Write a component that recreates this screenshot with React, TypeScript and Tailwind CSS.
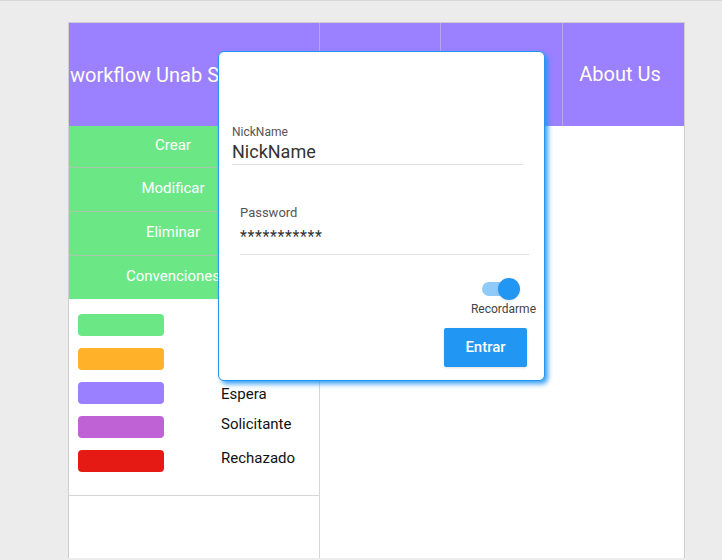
import { useState } from "react"

const menu = ["Crear", "Modificar", "Eliminar", "Convenciones"]

const legend = [
    { color: "bg-[#6ce786]", label: "Aprobado" },
    { color: "bg-[#ffb129]", label: "En proceso" },
    { color: "bg-[#9a80ff]", label: "Espera" },
    { color: "bg-[#bf62d6]", label: "Solicitante" },
    { color: "bg-[#e61a14]", label: "Rechazado" },
]

function Header() {
    return (
        <div className="flex h-[103px] bg-[#9b80ff] text-[20px] text-[#fffdf0]">
            <div className="w-[251px] flex items-center border-r border-[#b5a6f0] overflow-hidden whitespace-nowrap pl-px">
                workflow Unab Sistema
            </div>
            <div className="w-[121px] flex items-center justify-center border-r border-[#b5a6f0]">Inicio</div>
            <div className="w-[122px] flex items-center justify-center border-r border-[#b5a6f0]">Servicios</div>
            <div className="flex-1 flex items-center justify-center pr-[7px] pb-[2px]">About Us</div>
        </div>
    )
}

function Sidebar() {
    return (
        <div className="w-[251px] border-r border-[#d6d6d6] flex flex-col">
            <div className="w-[208px] flex flex-col">
                {menu.map((m, i) => (
                    <div key={m}
                        className={`${i === 0 ? "h-[41px]" : "h-[44px]"} bg-[#6ce786] text-white text-[15px] flex items-center justify-center pb-[2px] border-t border-[#a8c9b0] first:border-t-0`}>
                        {m}
                    </div>
                ))}
            </div>
            <div className="h-[197px] border-b border-[#d6d6d6] flex pt-[15px] pl-[9px]">
                <div className="flex flex-col gap-[12px]">
                    {legend.map(l => (
                        <div key={l.label} className={`w-[86px] h-[22px] rounded-[4px] ${l.color}`} />
                    ))}
                </div>
                <div className="relative flex-1 text-[15px] text-[#111]">
                    <div className="absolute left-[57px] top-[69px]">Espera</div>
                    <div className="absolute left-[57px] top-[99px]">Solicitante</div>
                    <div className="absolute left-[57px] top-[133px]">Rechazado</div>
                </div>
            </div>
        </div>
    )
}

function LoginModal() {
    const [remember, setRemember] = useState(true)
    return (
        <div className="absolute left-[149px] top-[28px] w-[327px] h-[330px] bg-white rounded-[6px] border border-[#2196f3] shadow-[3px_3px_5px_rgba(33,150,243,0.9)]">
            <div className="pl-[13px] pt-[73px] w-[304px]">
                <div className="text-[12px] text-[#555] leading-[14px]">NickName</div>
                <div className="text-[18px] text-[#333] leading-[22px] pt-[2px] pb-[1px] border-b border-[#e0e0e0]">NickName</div>
            </div>
            <div className="pl-[21px] pt-[40px] w-[310px]">
                <div className="text-[13px] text-[#555] leading-[16px]">Password</div>
                <div className="text-[16px] text-[#333] leading-[20px] pt-[6px] pb-[7px] border-b border-[#e0e0e0] tracking-[0.6px]">***********</div>
            </div>
            <div className="flex flex-col items-end pr-[8px] pt-[23px]">
                <button onClick={() => setRemember(!remember)} className="relative w-[40px] h-[22px] mr-[15px]">
                    <span className="absolute left-[1px] top-[4px] w-[28px] h-[14px] rounded-full bg-[#90caf9]" />
                    <span className={`absolute top-0 w-[22px] h-[22px] rounded-full bg-[#2196f3] shadow ${remember ? "left-[17px]" : "left-0"}`} />
                </button>
                <div className="text-[12px] text-[#444] leading-[14px] mt-[2px]">Recordarme</div>
                <button className="mt-[12px] mr-[9px] w-[83px] h-[39px] bg-[#2196f3] text-white text-[15px] font-medium rounded-[2px] shadow-sm">
                    Entrar
                </button>
            </div>
        </div>
    )
}

export default function App() {
    return (
        <div className="w-[722px] h-[560px] bg-[#ececec] border-t border-[#d8d8d8] pt-[21px] pl-[68px] overflow-hidden" style={{ fontFamily: "Roboto, sans-serif" }}>
            <div className="relative w-[617px] h-[536px] bg-white border-l border-r border-t border-[#cfcfcf] flex flex-col">
                <Header />
                <div className="flex flex-1">
                    <Sidebar />
                    <div className="flex-1" />
                </div>
                <LoginModal />
            </div>
        </div>
    )
}
